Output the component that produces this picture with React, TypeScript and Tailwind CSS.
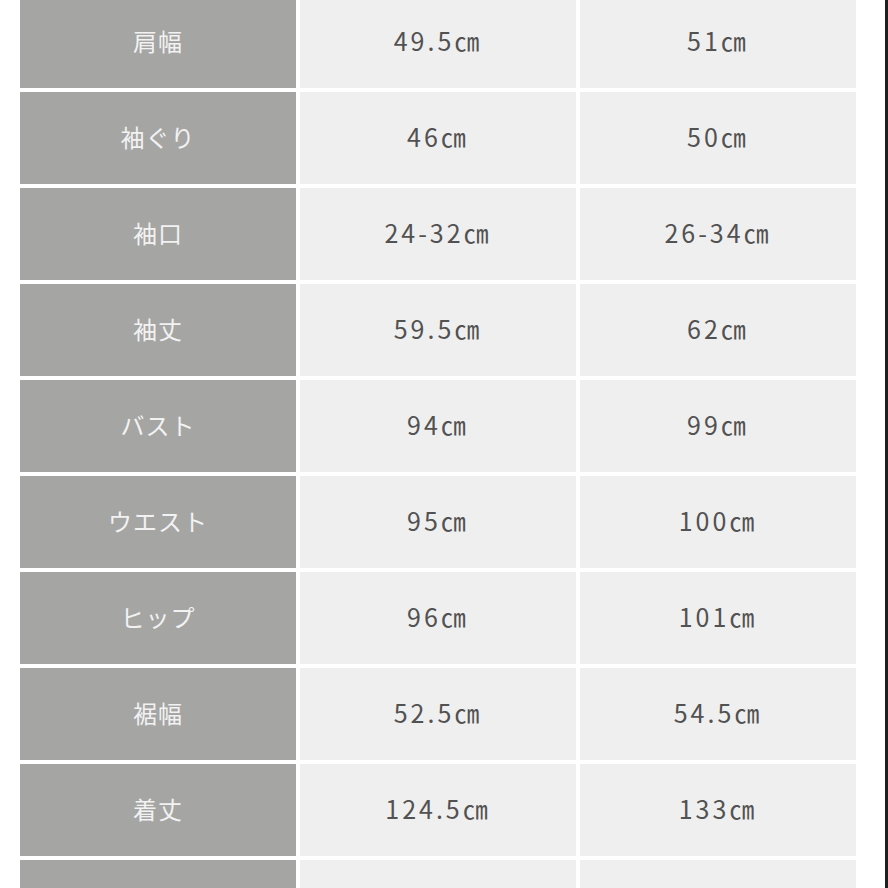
const rows: [string, string, string][] = [
  ['肩幅', '49.5㎝', '51㎝'],
  ['袖ぐり', '46㎝', '50㎝'],
  ['袖口', '24-32㎝', '26-34㎝'],
  ['袖丈', '59.5㎝', '62㎝'],
  ['バスト', '94㎝', '99㎝'],
  ['ウエスト', '95㎝', '100㎝'],
  ['ヒップ', '96㎝', '101㎝'],
  ['裾幅', '52.5㎝', '54.5㎝'],
  ['着丈', '124.5㎝', '133㎝'],
  ['', '', ''],
]

export default function App() {
  return (
    <div
      className="flex h-[888px] w-[888px] overflow-hidden bg-white"
      style={{ fontFamily: '"Noto Sans CJK JP", "Noto Sans", sans-serif' }}
    >
      <div className="ml-[20px] mt-[-4px] flex w-[836px] flex-col gap-[4px]">
        {rows.map(([label, a, b], i) => (
          <div key={i} className="grid h-[92px] shrink-0 grid-cols-[276px_276px_276px] gap-[4px]">
            <div className="flex items-center justify-center bg-[#a5a5a4] pb-[3px] text-[24px] tracking-[1px] text-[#f2f2f2]">
              {label}
            </div>
            <div className="flex items-center justify-center bg-[#efefef] pb-[3px] text-[25px] tracking-[3px] text-[#525252]">
              {a}
            </div>
            <div className="flex items-center justify-center bg-[#efefef] pb-[3px] text-[25px] tracking-[3px] text-[#525252]">
              {b}
            </div>
          </div>
        ))}
      </div>
      <div className="ml-auto w-[3px] bg-[#1f1f1f]" />
    </div>
  )
}
